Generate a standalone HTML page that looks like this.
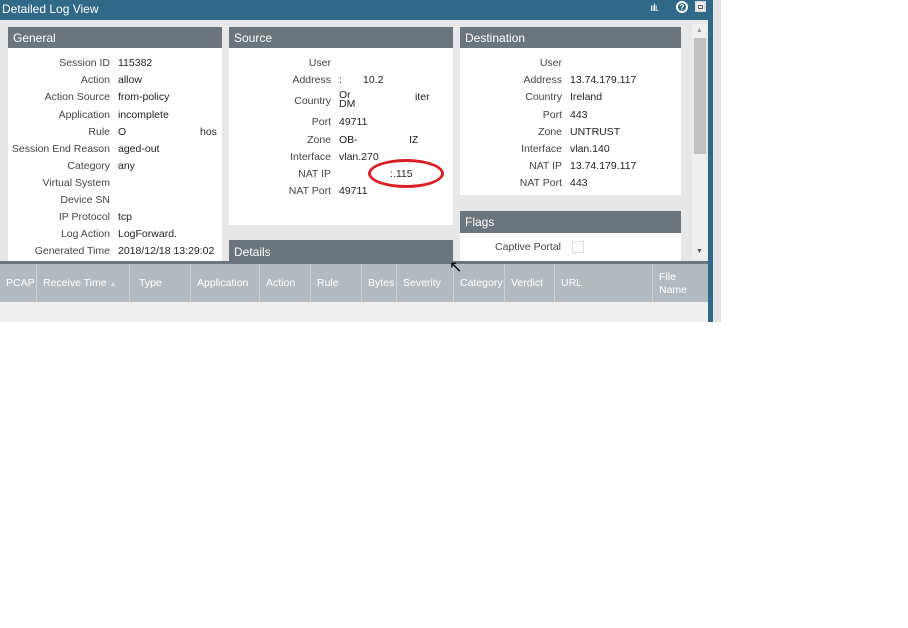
<!DOCTYPE html>
<html><head><style>
*{margin:0;padding:0;box-sizing:border-box}
body{width:908px;height:628px;background:#fff;font-family:"Liberation Sans",sans-serif;font-size:10.5px;color:#222;position:relative;overflow:hidden}
.a{position:absolute}
.hd{background:#6b757d;color:#fff;font-size:12px;padding:4px 0 0 5px;height:21px}
.pn{background:#fff}
.l{position:absolute;right:0;text-align:right;color:#444}
.v{position:absolute}
.th{position:absolute;top:0;height:38px;border-right:1px solid #cdd2d5;color:#fff;padding:13px 0 0 6px;font-size:10.5px}
</style></head><body>
<div class="a" style="left:0;top:0;width:708px;height:322px;background:#e8e8e8"></div>
<div class="a" style="left:0;top:0;width:708px;height:20px;background:#2f6987;color:#fff;font-size:12px;padding:2px 0 0 2px">Detailed Log View</div>
<div class="a" style="left:708px;top:0;width:5px;height:322px;background:#2f6987"></div>
<div class="a" style="left:713px;top:0;width:8px;height:322px;background:#e4e4e4"></div>
<div class="a" style="left:650px;top:3px;color:#fff;font-size:10px;letter-spacing:-1px">ıılı.</div>
<div class="a" style="left:676px;top:1px;width:12px;height:12px;border:2px solid #fff;border-radius:50%;color:#fff;font-size:8px;font-weight:bold;text-align:center;line-height:9px">?</div>
<div class="a" style="left:695px;top:1px;width:11px;height:11px;background:#fff;border:2px solid #ddd"><div style="margin:2px 1px;height:4px;border:1px solid #555"></div></div>
<div class="a" style="left:692px;top:24px;width:14px;height:238px;background:#efefef"></div>
<div class="a" style="left:694px;top:38px;width:12px;height:116px;background:#c1c1c1"></div>
<div class="a" style="left:696px;top:27px;font-size:7px;color:#999">▲</div>
<div class="a" style="left:696px;top:248px;font-size:7px;color:#555">▼</div>

<div class="a pn" style="left:8px;top:27px;width:214px;height:236px"><div class="hd">General</div></div>
<div class="a" style="left:8px;top:57px;width:214px">
<div class="l" style="right:112px;top:0">Session ID</div><div class="v" style="left:110px;top:0">115382</div>
<div class="l" style="right:112px;top:17px">Action</div><div class="v" style="left:110px;top:17px">allow</div>
<div class="l" style="right:112px;top:34px">Action Source</div><div class="v" style="left:110px;top:34px">from-policy</div>
<div class="l" style="right:112px;top:52px">Application</div><div class="v" style="left:110px;top:52px">incomplete</div>
<div class="l" style="right:112px;top:69px">Rule</div><div class="v" style="left:110px;top:69px">O</div><div class="v" style="left:192px;top:69px">hos</div>
<div class="l" style="right:112px;top:86px">Session End Reason</div><div class="v" style="left:110px;top:86px">aged-out</div>
<div class="l" style="right:112px;top:103px">Category</div><div class="v" style="left:110px;top:103px">any</div>
<div class="l" style="right:112px;top:120px">Virtual System</div>
<div class="l" style="right:112px;top:137px">Device SN</div>
<div class="l" style="right:112px;top:154px">IP Protocol</div><div class="v" style="left:110px;top:154px">tcp</div>
<div class="l" style="right:112px;top:171px">Log Action</div><div class="v" style="left:110px;top:171px">LogForward.</div>
<div class="l" style="right:112px;top:188px">Generated Time</div><div class="v" style="left:110px;top:188px">2018/12/18 13:29:02</div>
</div>

<div class="a pn" style="left:229px;top:27px;width:224px;height:198px"><div class="hd">Source</div></div>
<div class="a" style="left:229px;top:57px;width:224px">
<div class="l" style="right:122px;top:0">User</div>
<div class="l" style="right:122px;top:17px">Address</div><div class="v" style="left:110px;top:17px">:</div><div class="v" style="left:134px;top:17px">10.2</div>
<div class="l" style="right:122px;top:38px">Country</div><div class="v" style="left:110px;top:34px;line-height:9px">Or<br>DM</div><div class="v" style="left:186px;top:34px">iter</div>
<div class="l" style="right:122px;top:59px">Port</div><div class="v" style="left:110px;top:59px">49711</div>
<div class="l" style="right:122px;top:77px">Zone</div><div class="v" style="left:110px;top:77px">OB-</div><div class="v" style="left:180px;top:77px">IZ</div>
<div class="l" style="right:122px;top:94px">Interface</div><div class="v" style="left:110px;top:94px">vlan.270</div>
<div class="l" style="right:122px;top:111px">NAT IP</div><div class="v" style="left:161px;top:111px">:.115</div>
<div class="l" style="right:122px;top:128px">NAT Port</div><div class="v" style="left:110px;top:128px">49711</div>
</div>
<div class="a" style="left:368px;top:159px;width:76px;height:29px;border:3px solid #d8202a;border-radius:50%"></div>
<div class="a" style="left:229px;top:240px;width:224px;height:22px;background:#6b757d;color:#fff;font-size:12px;padding:5px 0 0 5px">Details</div>

<div class="a pn" style="left:460px;top:27px;width:221px;height:168px"><div class="hd">Destination</div></div>
<div class="a" style="left:460px;top:57px;width:221px">
<div class="l" style="right:119px;top:0">User</div>
<div class="l" style="right:119px;top:17px">Address</div><div class="v" style="left:110px;top:17px">13.74.179.117</div>
<div class="l" style="right:119px;top:34px">Country</div><div class="v" style="left:110px;top:34px">Ireland</div>
<div class="l" style="right:119px;top:52px">Port</div><div class="v" style="left:110px;top:52px">443</div>
<div class="l" style="right:119px;top:69px">Zone</div><div class="v" style="left:110px;top:69px">UNTRUST</div>
<div class="l" style="right:119px;top:86px">Interface</div><div class="v" style="left:110px;top:86px">vlan.140</div>
<div class="l" style="right:119px;top:103px">NAT IP</div><div class="v" style="left:110px;top:103px">13.74.179.117</div>
<div class="l" style="right:119px;top:120px">NAT Port</div><div class="v" style="left:110px;top:120px">443</div>
</div>
<div class="a pn" style="left:460px;top:211px;width:221px;height:52px"><div class="hd" style="height:22px">Flags</div></div>
<div class="a" style="left:460px;top:241px;width:101px;text-align:right;color:#444">Captive Portal</div>
<div class="a" style="left:572px;top:241px;width:12px;height:12px;border:1px solid #ddd"></div>

<div class="a" style="left:0;top:261px;width:708px;height:3px;background:#6b757d"></div>
<div class="a" style="left:0;top:264px;width:708px;height:38px;background:#b4bbc0">
<div class="th" style="left:0;width:37px">PCAP</div>
<div class="th" style="left:37px;width:93px">Receive Time <span style="font-size:7px;color:#ddd">▲</span></div>
<div class="th" style="left:130px;width:61px;padding-left:9px">Type</div>
<div class="th" style="left:191px;width:69px">Application</div>
<div class="th" style="left:260px;width:51px">Action</div>
<div class="th" style="left:311px;width:51px">Rule</div>
<div class="th" style="left:362px;width:35px">Bytes</div>
<div class="th" style="left:397px;width:57px">Severity</div>
<div class="th" style="left:454px;width:51px">Category</div>
<div class="th" style="left:505px;width:50px">Verdict</div>
<div class="th" style="left:555px;width:98px">URL</div>
<div class="th" style="left:653px;width:55px;padding-top:7px;line-height:13px;border:none">File<br>Name</div>
</div>
<div class="a" style="left:0;top:302px;width:708px;height:20px;background:#efefef"></div>
<div class="a" style="left:449px;top:257px;font-size:16px;color:#000">↖</div>
</body></html>
